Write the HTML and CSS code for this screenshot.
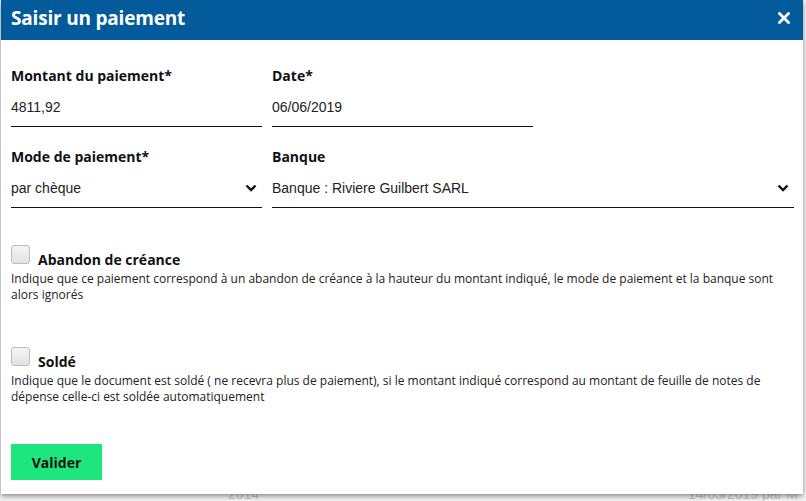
FILE: index.html
```html
<!DOCTYPE html>
<html lang="fr">
<head>
<meta charset="utf-8">
<title>Saisir un paiement</title>
<link rel="stylesheet" href="styles.css">
</head>
<body>
<div class="backdrop">
  <span class="bg-text bg-left">2014</span>
  <span class="bg-text bg-right">14/03/2019 par M</span>
</div>
<div class="modal">
  <div class="modal-header">
    <h1 class="modal-title">Saisir un paiement</h1>
    <svg class="close" width="12" height="12" viewBox="0 0 12 12"><path d="M1.5 1.5 L10.5 10.5 M10.5 1.5 L1.5 10.5" stroke="#fff" stroke-width="2.8" stroke-linecap="square"/></svg>
  </div>
  <div class="modal-body">
    <div class="form-grid">
      <div class="field">
        <label class="field-label">Montant du paiement*</label>
        <div class="field-input">4811,92</div>
      </div>
      <div class="field">
        <label class="field-label">Date*</label>
        <div class="field-input">06/06/2019</div>
      </div>
      <div class="field mode">
        <label class="field-label">Mode de paiement*</label>
        <div class="field-input select">
          <span>par chèque</span>
          <svg class="chev" width="12" height="8" viewBox="0 0 12 8"><path d="M1.5 1.5 L6 6 L10.5 1.5" fill="none" stroke="#111" stroke-width="2.4"/></svg>
        </div>
      </div>
      <div class="field wide">
        <label class="field-label">Banque</label>
        <div class="field-input select">
          <span>Banque : Riviere Guilbert SARL</span>
          <svg class="chev" width="12" height="8" viewBox="0 0 12 8"><path d="M1.5 1.5 L6 6 L10.5 1.5" fill="none" stroke="#111" stroke-width="2.4"/></svg>
        </div>
      </div>
    </div>

    <div class="check-block first">
      <div class="check-row">
        <span class="checkbox"></span>
        <span class="check-label">Abandon de créance</span>
      </div>
      <p class="check-desc">Indique que ce paiement correspond à un abandon de créance à la hauteur du montant indiqué, le mode de paiement et la banque sont alors ignorés</p>
    </div>

    <div class="check-block second">
      <div class="check-row">
        <span class="checkbox"></span>
        <span class="check-label">Soldé</span>
      </div>
      <p class="check-desc">Indique que le document est soldé ( ne recevra plus de paiement), si le montant indiqué correspond au montant de feuille de notes de dépense celle-ci est soldée automatiquement</p>
    </div>

    <button class="btn-valider">Valider</button>
  </div>
</div>
</body>
</html>
```

FILE: styles.css
```css
* { box-sizing: border-box; }
html, body {
  margin: 0;
  padding: 0;
  width: 806px;
  height: 501px;
  overflow: hidden;
  background: #eeeeee;
  font-family: "Open Sans", "Liberation Sans", sans-serif;
}
.backdrop {
  position: absolute;
  left: 0; top: 0;
  width: 806px; height: 501px;
  background: #f3f3f3;
}
.bg-text {
  position: absolute;
  top: 487px;
  font-family: "Liberation Sans", sans-serif;
  font-size: 14px;
  line-height: 14px;
  color: #c4c4c4;
}
.bg-left { left: 228px; }
.bg-right { left: 688px; }

.modal {
  position: absolute;
  left: 1px;
  top: 0;
  width: 802px;
  height: 494px;
  background: #fff;
  box-shadow: 0 2px 5px rgba(0,0,0,0.45);
  display: flex;
  flex-direction: column;
}
.modal-header {
  height: 40px;
  background: #035b9b;
  display: flex;
  align-items: center;
  justify-content: space-between;
  padding: 0 13px 0 10px;
}
.modal-title {
  margin: 0;
  color: #fff;
  font-family: "Open Sans", sans-serif;
  font-weight: 700;
  font-size: 19px;
  letter-spacing: -0.2px;
  line-height: 1;
  margin-top: -3px;
}
.close {
  display: block;
  margin-top: -5px;
}
.modal-body {
  padding: 26px 9px 0 10px;
  display: flex;
  flex-direction: column;
  align-items: flex-start;
}
.form-grid {
  display: grid;
  grid-template-columns: 251px 261px 1fr;
  column-gap: 10px;
  row-gap: 20px;
  width: 100%;
}
.field { display: flex; flex-direction: column; }
.mode { grid-column: 1; }
.wide { grid-column: 2 / 4; }
.field-label {
  font-weight: 700;
  font-size: 14px;
  line-height: 19px;
  color: #111;
  height: 19px;
}
.field-input {
  height: 42px;
  border-bottom: 1.5px solid #111;
  font-family: "Liberation Sans", Arial, sans-serif;
  font-size: 14px;
  color: #222;
  display: flex;
  align-items: center;
  padding-top: 2px;
}
.select {
  justify-content: space-between;
  padding-right: 5px;
}
.chev { display: block; margin-top: 1px; }

.check-block { width: 100%; }
.check-block.first { margin-top: 37px; }
.check-block.second { margin-top: 44px; }
.check-row {
  display: flex;
  align-items: flex-start;
  gap: 8px;
}
.checkbox {
  width: 19px;
  height: 19px;
  border: 1px solid #bdbdbd;
  border-radius: 3px;
  background: linear-gradient(#f4f4f4, #e2e2e2);
}
.check-label {
  font-weight: 700;
  font-size: 14px;
  line-height: 19px;
  color: #111;
  margin-top: 5px;
}
.check-desc {
  margin: 2px 0 0 0;
  font-size: 12px;
  line-height: 16px;
  color: #222;
  padding-right: 10px;
}
.btn-valider {
  margin-top: 39px;
  width: 91px;
  height: 36px;
  border: none;
  background: #1ee67e;
  font-family: "Open Sans", sans-serif;
  font-weight: 700;
  font-size: 14px;
  color: #111;
  padding: 0;
}
```
